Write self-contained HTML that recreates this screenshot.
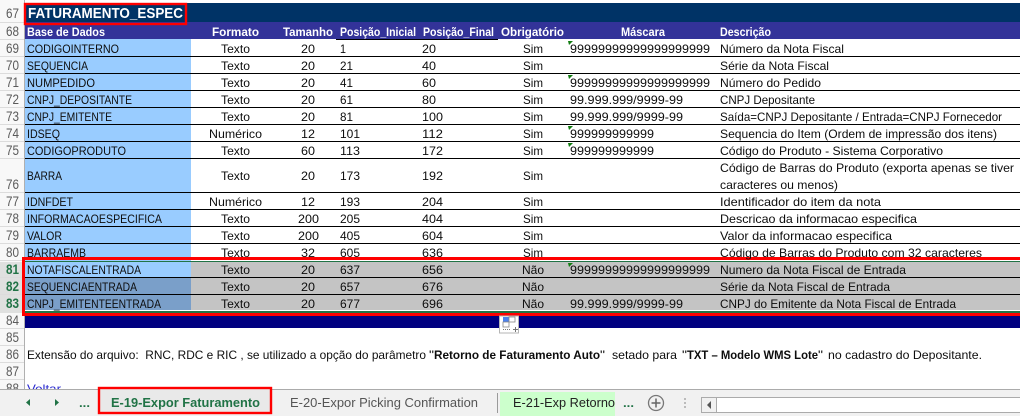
<!DOCTYPE html>
<html><head><meta charset="utf-8"><style>
html,body{margin:0;padding:0;background:#fff;width:1020px;height:416px;overflow:hidden}
svg{display:block}
text{font-family:"Liberation Sans",sans-serif;font-size:12px;fill:#0d0d0d}
.n{font-size:14px;fill:#5a5a5a}
.g{font-size:14px;fill:#217346;font-weight:bold}
.h{font-weight:bold;fill:#fff}
.b{font-weight:bold}
</style></head><body>
<svg width="1020" height="416" viewBox="0 0 1020 416" xmlns="http://www.w3.org/2000/svg">
<rect width="1020" height="416" fill="#fff"/>
<!-- row header -->
<rect x="0" y="0" width="24" height="390" fill="#f8f8f8"/>
<rect x="0" y="262" width="24" height="51" fill="#dfe0df"/>
<rect x="24" y="0" width="1" height="390" fill="#b0b0b0"/>
<g fill="#dcdcdc">
<rect x="0" y="22" width="24" height="1"/><rect x="0" y="39" width="24" height="1"/><rect x="0" y="56" width="24" height="1"/><rect x="0" y="73" width="24" height="1"/><rect x="0" y="90" width="24" height="1"/><rect x="0" y="107" width="24" height="1"/><rect x="0" y="124" width="24" height="1"/><rect x="0" y="141" width="24" height="1"/><rect x="0" y="158" width="24" height="1"/><rect x="0" y="192" width="24" height="1"/><rect x="0" y="209" width="24" height="1"/><rect x="0" y="226" width="24" height="1"/><rect x="0" y="243" width="24" height="1"/><rect x="0" y="260" width="24" height="1"/><rect x="0" y="277" width="24" height="1"/><rect x="0" y="294" width="24" height="1"/><rect x="0" y="328" width="24" height="1"/><rect x="0" y="345" width="24" height="1"/><rect x="0" y="362" width="24" height="1"/><rect x="0" y="379" width="24" height="1"/>
</g>
<!-- fills -->
<rect x="25" y="3" width="995" height="19" fill="#003366"/>
<rect x="25" y="22" width="995" height="17" fill="#333399"/>
<rect x="25" y="39" width="166" height="223" fill="#99ccff"/>
<rect x="25" y="262" width="166" height="16" fill="#99ccff"/>
<rect x="25" y="278" width="166" height="33" fill="#7a9fc9"/>
<rect x="191" y="262" width="829" height="49" fill="#c4c4c4"/>
<rect x="25" y="316" width="995" height="12" fill="#000080"/>
<!-- grid lines -->
<g fill="#000">
<rect x="25" y="56" width="995" height="1"/><rect x="25" y="73" width="995" height="1"/><rect x="25" y="90" width="995" height="1"/><rect x="25" y="107" width="995" height="1"/><rect x="25" y="124" width="995" height="1"/><rect x="25" y="141" width="995" height="1"/><rect x="25" y="158" width="995" height="1"/><rect x="25" y="192" width="995" height="1"/><rect x="25" y="209" width="995" height="1"/><rect x="25" y="226" width="995" height="1"/><rect x="25" y="243" width="995" height="1"/><rect x="25" y="277" width="995" height="1"/><rect x="25" y="294" width="995" height="1"/>
<rect x="336" y="39" width="162" height="1"/>
</g>
<!-- comment triangles -->
<g fill="#107c10">
<path d="M568 41h5l-4 4z"/><path d="M568 75h5l-4 4z"/><path d="M568 126h5l-4 4z"/><path d="M568 143h5l-4 4z"/><path d="M568 263h5l-4 4z"/>
</g>
<!-- selection + red boxes -->
<rect x="25" y="261" width="995" height="1" fill="#217346"/>
<rect x="25" y="310" width="995" height="1" fill="#fff"/>
<rect x="25" y="311" width="995" height="2" fill="#217346"/>
<rect x="25" y="4" width="161" height="20" fill="none" stroke="#f00" stroke-width="2.4"/>
<rect x="23.5" y="258.5" width="1000" height="56" fill="none" stroke="#f00" stroke-width="3"/>

<!-- row numbers -->
<text class="n" x="6" y="18" textLength="13" lengthAdjust="spacingAndGlyphs">67</text>
<text class="n" x="6" y="36" textLength="13" lengthAdjust="spacingAndGlyphs">68</text>
<text class="n" x="6" y="53" textLength="13" lengthAdjust="spacingAndGlyphs">69</text>
<text class="n" x="6" y="70" textLength="13" lengthAdjust="spacingAndGlyphs">70</text>
<text class="n" x="6" y="87" textLength="13" lengthAdjust="spacingAndGlyphs">71</text>
<text class="n" x="6" y="104" textLength="13" lengthAdjust="spacingAndGlyphs">72</text>
<text class="n" x="6" y="121" textLength="13" lengthAdjust="spacingAndGlyphs">73</text>
<text class="n" x="6" y="138" textLength="13" lengthAdjust="spacingAndGlyphs">74</text>
<text class="n" x="6" y="155" textLength="13" lengthAdjust="spacingAndGlyphs">75</text>
<text class="n" x="6" y="189" textLength="13" lengthAdjust="spacingAndGlyphs">76</text>
<text class="n" x="6" y="206" textLength="13" lengthAdjust="spacingAndGlyphs">77</text>
<text class="n" x="6" y="223" textLength="13" lengthAdjust="spacingAndGlyphs">78</text>
<text class="n" x="6" y="240" textLength="13" lengthAdjust="spacingAndGlyphs">79</text>
<text class="n" x="6" y="257" textLength="13" lengthAdjust="spacingAndGlyphs">80</text>
<text class="g" x="6" y="274" textLength="13" lengthAdjust="spacingAndGlyphs">81</text>
<text class="g" x="6" y="291" textLength="13" lengthAdjust="spacingAndGlyphs">82</text>
<text class="g" x="6" y="308" textLength="13" lengthAdjust="spacingAndGlyphs">83</text>
<text class="n" x="6" y="325" textLength="13" lengthAdjust="spacingAndGlyphs">84</text>
<text class="n" x="6" y="342" textLength="13" lengthAdjust="spacingAndGlyphs">85</text>
<text class="n" x="6" y="359" textLength="13" lengthAdjust="spacingAndGlyphs">86</text>
<text class="n" x="6" y="376" textLength="13" lengthAdjust="spacingAndGlyphs">87</text>
<text class="n" x="6" y="393" textLength="13" lengthAdjust="spacingAndGlyphs">88</text>

<!-- title + header -->
<text x="28" y="18" textLength="155" lengthAdjust="spacingAndGlyphs" style="font-size:15px;font-weight:bold;fill:#fff">FATURAMENTO_ESPEC</text>
<g class="hdr">
<text class="h" x="27" y="36" textLength="78" lengthAdjust="spacingAndGlyphs">Base de Dados</text>
<text class="h" x="212" y="36" textLength="47" lengthAdjust="spacingAndGlyphs">Formato</text>
<text class="h" x="283" y="36" textLength="50" lengthAdjust="spacingAndGlyphs">Tamanho</text>
<text class="h" x="340" y="36" textLength="76" lengthAdjust="spacingAndGlyphs">Posição_Inicial</text>
<text class="h" x="423" y="36" textLength="71" lengthAdjust="spacingAndGlyphs">Posição_Final</text>
<text class="h" x="501" y="36" textLength="63" lengthAdjust="spacingAndGlyphs">Obrigatório</text>
<text class="h" x="621" y="36" textLength="44" lengthAdjust="spacingAndGlyphs">Máscara</text>
<text class="h" x="720" y="36" textLength="51" lengthAdjust="spacingAndGlyphs">Descrição</text>
</g>

<!-- col A -->
<text x="27" y="53" textLength="92" lengthAdjust="spacingAndGlyphs">CODIGOINTERNO</text>
<text x="27" y="70" textLength="61" lengthAdjust="spacingAndGlyphs">SEQUENCIA</text>
<text x="27" y="87" textLength="68" lengthAdjust="spacingAndGlyphs">NUMPEDIDO</text>
<text x="27" y="104" textLength="105" lengthAdjust="spacingAndGlyphs">CNPJ_DEPOSITANTE</text>
<text x="27" y="121" textLength="85" lengthAdjust="spacingAndGlyphs">CNPJ_EMITENTE</text>
<text x="27" y="138" textLength="33" lengthAdjust="spacingAndGlyphs">IDSEQ</text>
<text x="27" y="155" textLength="99" lengthAdjust="spacingAndGlyphs">CODIGOPRODUTO</text>
<text x="27" y="180" textLength="35" lengthAdjust="spacingAndGlyphs">BARRA</text>
<text x="27" y="206" textLength="46" lengthAdjust="spacingAndGlyphs">IDNFDET</text>
<text x="27" y="223" textLength="135" lengthAdjust="spacingAndGlyphs">INFORMACAOESPECIFICA</text>
<text x="27" y="240" textLength="35" lengthAdjust="spacingAndGlyphs">VALOR</text>
<text x="27" y="257" textLength="59" lengthAdjust="spacingAndGlyphs">BARRAEMB</text>
<text x="27" y="274" textLength="114" lengthAdjust="spacingAndGlyphs">NOTAFISCALENTRADA</text>
<text x="27" y="291" textLength="110" lengthAdjust="spacingAndGlyphs">SEQUENCIAENTRADA</text>
<text x="27" y="308" textLength="134" lengthAdjust="spacingAndGlyphs">CNPJ_EMITENTEENTRADA</text>

<!-- Formato -->
<text x="221" y="53" textLength="29" lengthAdjust="spacingAndGlyphs">Texto</text>
<text x="221" y="70" textLength="29" lengthAdjust="spacingAndGlyphs">Texto</text>
<text x="221" y="87" textLength="29" lengthAdjust="spacingAndGlyphs">Texto</text>
<text x="221" y="104" textLength="29" lengthAdjust="spacingAndGlyphs">Texto</text>
<text x="221" y="121" textLength="29" lengthAdjust="spacingAndGlyphs">Texto</text>
<text x="209" y="138" textLength="53" lengthAdjust="spacingAndGlyphs">Numérico</text>
<text x="221" y="155" textLength="29" lengthAdjust="spacingAndGlyphs">Texto</text>
<text x="221" y="180" textLength="29" lengthAdjust="spacingAndGlyphs">Texto</text>
<text x="209" y="206" textLength="53" lengthAdjust="spacingAndGlyphs">Numérico</text>
<text x="221" y="223" textLength="29" lengthAdjust="spacingAndGlyphs">Texto</text>
<text x="221" y="240" textLength="29" lengthAdjust="spacingAndGlyphs">Texto</text>
<text x="221" y="257" textLength="29" lengthAdjust="spacingAndGlyphs">Texto</text>
<text x="221" y="274" textLength="29" lengthAdjust="spacingAndGlyphs">Texto</text>
<text x="221" y="291" textLength="29" lengthAdjust="spacingAndGlyphs">Texto</text>
<text x="221" y="308" textLength="29" lengthAdjust="spacingAndGlyphs">Texto</text>

<!-- Tamanho -->
<text x="301" y="53" textLength="14" lengthAdjust="spacingAndGlyphs">20</text>
<text x="301" y="70" textLength="14" lengthAdjust="spacingAndGlyphs">20</text>
<text x="301" y="87" textLength="14" lengthAdjust="spacingAndGlyphs">20</text>
<text x="301" y="104" textLength="14" lengthAdjust="spacingAndGlyphs">20</text>
<text x="301" y="121" textLength="14" lengthAdjust="spacingAndGlyphs">20</text>
<text x="301" y="138" textLength="14" lengthAdjust="spacingAndGlyphs">12</text>
<text x="301" y="155" textLength="14" lengthAdjust="spacingAndGlyphs">60</text>
<text x="301" y="180" textLength="14" lengthAdjust="spacingAndGlyphs">20</text>
<text x="301" y="206" textLength="14" lengthAdjust="spacingAndGlyphs">12</text>
<text x="298" y="223" textLength="21" lengthAdjust="spacingAndGlyphs">200</text>
<text x="298" y="240" textLength="21" lengthAdjust="spacingAndGlyphs">200</text>
<text x="301" y="257" textLength="14" lengthAdjust="spacingAndGlyphs">32</text>
<text x="301" y="274" textLength="14" lengthAdjust="spacingAndGlyphs">20</text>
<text x="301" y="291" textLength="14" lengthAdjust="spacingAndGlyphs">20</text>
<text x="301" y="308" textLength="14" lengthAdjust="spacingAndGlyphs">20</text>

<!-- Posicao inicial -->
<text x="340" y="53" textLength="6" lengthAdjust="spacingAndGlyphs">1</text>
<text x="340" y="70" textLength="13" lengthAdjust="spacingAndGlyphs">21</text>
<text x="340" y="87" textLength="13" lengthAdjust="spacingAndGlyphs">41</text>
<text x="340" y="104" textLength="13" lengthAdjust="spacingAndGlyphs">61</text>
<text x="340" y="121" textLength="13" lengthAdjust="spacingAndGlyphs">81</text>
<text x="340" y="138" textLength="20" lengthAdjust="spacingAndGlyphs">101</text>
<text x="340" y="155" textLength="20" lengthAdjust="spacingAndGlyphs">113</text>
<text x="340" y="180" textLength="20" lengthAdjust="spacingAndGlyphs">173</text>
<text x="340" y="206" textLength="20" lengthAdjust="spacingAndGlyphs">193</text>
<text x="340" y="223" textLength="20" lengthAdjust="spacingAndGlyphs">205</text>
<text x="340" y="240" textLength="20" lengthAdjust="spacingAndGlyphs">405</text>
<text x="340" y="257" textLength="20" lengthAdjust="spacingAndGlyphs">605</text>
<text x="340" y="274" textLength="20" lengthAdjust="spacingAndGlyphs">637</text>
<text x="340" y="291" textLength="20" lengthAdjust="spacingAndGlyphs">657</text>
<text x="340" y="308" textLength="20" lengthAdjust="spacingAndGlyphs">677</text>

<!-- Posicao final -->
<text x="422" y="53" textLength="14" lengthAdjust="spacingAndGlyphs">20</text>
<text x="422" y="70" textLength="14" lengthAdjust="spacingAndGlyphs">40</text>
<text x="422" y="87" textLength="14" lengthAdjust="spacingAndGlyphs">60</text>
<text x="422" y="104" textLength="14" lengthAdjust="spacingAndGlyphs">80</text>
<text x="422" y="121" textLength="21" lengthAdjust="spacingAndGlyphs">100</text>
<text x="422" y="138" textLength="21" lengthAdjust="spacingAndGlyphs">112</text>
<text x="422" y="155" textLength="21" lengthAdjust="spacingAndGlyphs">172</text>
<text x="422" y="180" textLength="21" lengthAdjust="spacingAndGlyphs">192</text>
<text x="422" y="206" textLength="21" lengthAdjust="spacingAndGlyphs">204</text>
<text x="422" y="223" textLength="21" lengthAdjust="spacingAndGlyphs">404</text>
<text x="422" y="240" textLength="21" lengthAdjust="spacingAndGlyphs">604</text>
<text x="422" y="257" textLength="21" lengthAdjust="spacingAndGlyphs">636</text>
<text x="422" y="274" textLength="21" lengthAdjust="spacingAndGlyphs">656</text>
<text x="422" y="291" textLength="21" lengthAdjust="spacingAndGlyphs">676</text>
<text x="422" y="308" textLength="21" lengthAdjust="spacingAndGlyphs">696</text>

<!-- Obrigatorio -->
<text x="523" y="53" textLength="20" lengthAdjust="spacingAndGlyphs">Sim</text>
<text x="523" y="70" textLength="20" lengthAdjust="spacingAndGlyphs">Sim</text>
<text x="523" y="87" textLength="20" lengthAdjust="spacingAndGlyphs">Sim</text>
<text x="523" y="104" textLength="20" lengthAdjust="spacingAndGlyphs">Sim</text>
<text x="523" y="121" textLength="20" lengthAdjust="spacingAndGlyphs">Sim</text>
<text x="523" y="138" textLength="20" lengthAdjust="spacingAndGlyphs">Sim</text>
<text x="523" y="155" textLength="20" lengthAdjust="spacingAndGlyphs">Sim</text>
<text x="523" y="180" textLength="20" lengthAdjust="spacingAndGlyphs">Sim</text>
<text x="523" y="206" textLength="20" lengthAdjust="spacingAndGlyphs">Sim</text>
<text x="523" y="223" textLength="20" lengthAdjust="spacingAndGlyphs">Sim</text>
<text x="523" y="240" textLength="20" lengthAdjust="spacingAndGlyphs">Sim</text>
<text x="523" y="257" textLength="20" lengthAdjust="spacingAndGlyphs">Sim</text>
<text x="522" y="274" textLength="22" lengthAdjust="spacingAndGlyphs">Não</text>
<text x="522" y="291" textLength="22" lengthAdjust="spacingAndGlyphs">Não</text>
<text x="522" y="308" textLength="22" lengthAdjust="spacingAndGlyphs">Não</text>

<!-- Mascara -->
<text x="570" y="53" textLength="140" lengthAdjust="spacingAndGlyphs">99999999999999999999</text>
<text x="570" y="87" textLength="140" lengthAdjust="spacingAndGlyphs">99999999999999999999</text>
<text x="570" y="104" textLength="113" lengthAdjust="spacingAndGlyphs">99.999.999/9999-99</text>
<text x="570" y="121" textLength="113" lengthAdjust="spacingAndGlyphs">99.999.999/9999-99</text>
<text x="570" y="138" textLength="84" lengthAdjust="spacingAndGlyphs">999999999999</text>
<text x="570" y="155" textLength="84" lengthAdjust="spacingAndGlyphs">999999999999</text>
<text x="570" y="274" textLength="140" lengthAdjust="spacingAndGlyphs">99999999999999999999</text>
<text x="570" y="308" textLength="113" lengthAdjust="spacingAndGlyphs">99.999.999/9999-99</text>

<!-- Descricao -->
<text x="720" y="53" textLength="124" lengthAdjust="spacingAndGlyphs">Número da Nota Fiscal</text>
<text x="720" y="70" textLength="109" lengthAdjust="spacingAndGlyphs">Série da Nota Fiscal</text>
<text x="720" y="87" textLength="101" lengthAdjust="spacingAndGlyphs">Número do Pedido</text>
<text x="720" y="104" textLength="95" lengthAdjust="spacingAndGlyphs">CNPJ Depositante</text>
<text x="720" y="121" textLength="282" lengthAdjust="spacingAndGlyphs">Saída=CNPJ Depositante / Entrada=CNPJ Fornecedor</text>
<text x="720" y="138" textLength="277" lengthAdjust="spacingAndGlyphs">Sequencia do Item (Ordem de impressão dos itens)</text>
<text x="720" y="155" textLength="223" lengthAdjust="spacingAndGlyphs">Código do Produto - Sistema Corporativo</text>
<text x="720" y="172" textLength="294" lengthAdjust="spacingAndGlyphs">Código de Barras do Produto (exporta apenas se tiver</text>
<text x="720" y="189" textLength="118" lengthAdjust="spacingAndGlyphs">caracteres ou menos)</text>
<text x="720" y="206" textLength="161" lengthAdjust="spacingAndGlyphs">Identificador do item da nota</text>
<text x="720" y="223" textLength="197" lengthAdjust="spacingAndGlyphs">Descricao da informacao especifica</text>
<text x="720" y="240" textLength="172" lengthAdjust="spacingAndGlyphs">Valor da informacao especifica</text>
<text x="720" y="257" textLength="262" lengthAdjust="spacingAndGlyphs">Código de Barras do Produto com 32 caracteres</text>
<text x="720" y="274" textLength="186" lengthAdjust="spacingAndGlyphs">Numero da Nota Fiscal de Entrada</text>
<text x="720" y="291" textLength="170" lengthAdjust="spacingAndGlyphs">Série da Nota Fiscal de Entrada</text>
<text x="720" y="308" textLength="236" lengthAdjust="spacingAndGlyphs">CNPJ do Emitente da Nota Fiscal de Entrada</text>

<!-- note -->
<text x="27" y="359" textLength="399" lengthAdjust="spacingAndGlyphs" style="white-space:pre">Extensão do arquivo:  RNC, RDC e RIC , se utilizado a opção do parâmetro</text>
<text x="429" y="359" textLength="5" lengthAdjust="spacingAndGlyphs">"</text>
<text class="b" x="434" y="359" textLength="166" lengthAdjust="spacingAndGlyphs">Retorno de Faturamento Auto</text>
<text x="600" y="359" textLength="5" lengthAdjust="spacingAndGlyphs">"</text>
<text x="612" y="359" textLength="65" lengthAdjust="spacingAndGlyphs">setado para</text>
<text x="682" y="359" textLength="5" lengthAdjust="spacingAndGlyphs">"</text>
<text class="b" x="687" y="359" textLength="131" lengthAdjust="spacingAndGlyphs">TXT – Modelo WMS Lote</text>
<text x="818" y="359" textLength="5" lengthAdjust="spacingAndGlyphs">"</text>
<text x="828" y="359" textLength="154" lengthAdjust="spacingAndGlyphs">no cadastro do Depositante.</text>
<text x="27" y="393" textLength="34" lengthAdjust="spacingAndGlyphs" style="fill:#2a2ad0">Voltar</text>

<!-- quick analysis icon -->
<rect x="499.500" y="316" width="19" height="17" fill="#fff" stroke="#b5b5b5"/>
<rect x="503" y="317" width="6" height="5" fill="#4d82ee"/>
<rect x="503" y="322" width="6" height="5" fill="#fff" stroke="#888" stroke-width=".8"/>
<rect x="509" y="317" width="6" height="5" fill="#fff" stroke="#888" stroke-width=".8"/>
<path d="M503 329.500h8" stroke="#777" stroke-dasharray="1 1" fill="none"/>
<path d="M513 329.500h5M515.500 327v5" stroke="#777" fill="none"/>

<!-- tab bar -->
<rect x="0" y="389" width="1020" height="27" fill="#f1f1f1"/>
<rect x="0" y="389" width="1020" height="1" fill="#ababab"/>
<path d="M30 399l-4 3.500 4 3.500z" fill="#217346"/>
<path d="M55 399l4 3.500-4 3.500z" fill="#217346"/>
<text x="79" y="407" textLength="11" lengthAdjust="spacingAndGlyphs" style="font-weight:bold;fill:#217346">...</text>
<rect x="100" y="389" width="170" height="24" fill="#e9e9e9"/>
<rect x="99" y="388" width="172" height="25" fill="none" stroke="#f00" stroke-width="2.400"/>
<text x="111" y="407" textLength="149" lengthAdjust="spacingAndGlyphs" style="font-size:13px;font-weight:bold;fill:#217346">E-19-Expor Faturamento</text>
<text x="290" y="407" textLength="188" lengthAdjust="spacingAndGlyphs" style="font-size:13px;fill:#555">E-20-Expor Picking Confirmation</text>
<rect x="497" y="393" width="1" height="20" fill="#9a9a9a"/>
<rect x="500" y="392" width="115" height="24" fill="#ccffcc"/>
<text x="513" y="407" textLength="102" lengthAdjust="spacingAndGlyphs" style="font-size:13px;fill:#222">E-21-Exp Retorno</text>
<text x="623" y="407" textLength="11" lengthAdjust="spacingAndGlyphs" style="font-weight:bold;fill:#217346">...</text>
<circle cx="656" cy="403" r="7.500" fill="none" stroke="#777" stroke-width="1.300"/>
<path d="M656 398.500v9M651.500 403h9" stroke="#666" stroke-width="1.500" fill="none"/>
<path d="M685 398v2M685 402v2M685 406v2" stroke="#bbb" stroke-width="2" fill="none"/>
<rect x="701.500" y="397.500" width="320" height="15" fill="#fff" stroke="#ababab"/>
<rect x="702" y="398" width="14" height="14" fill="#f1f1f1"/>
<rect x="716" y="397" width="1" height="16" fill="#ababab"/>
<path d="M711 401l-4 4 4 4z" fill="#555"/>
</svg>
</body></html>
